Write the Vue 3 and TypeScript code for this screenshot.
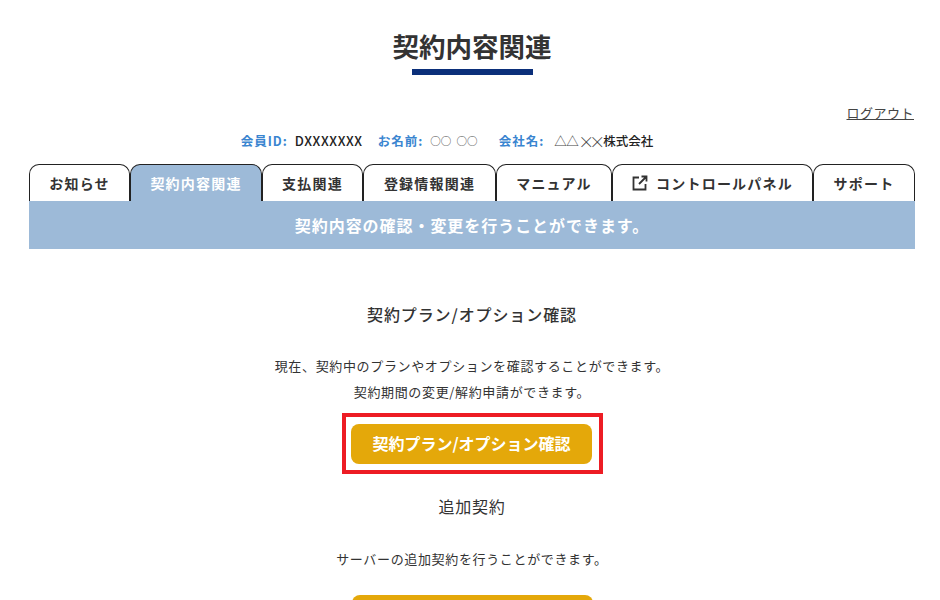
<script setup lang="ts">
const tabs = [
  { label: 'お知らせ', w: 101 },
  { label: '契約内容関連', w: 132, active: true },
  { label: '支払関連', w: 101 },
  { label: '登録情報関連', w: 133 },
  { label: 'マニュアル', w: 116 },
  { label: 'コントロールパネル', w: 201, ext: true },
  { label: 'サポート', w: 102 },
]
</script>

<template>
  <div class="page">
    <h1 class="title">契約内容関連</h1>
    <div class="rule"></div>
    <div class="logout-row"><a class="logout">ログアウト</a></div>
    <div class="info">
      <span class="item"><b>会員ID:</b><i class="id">DXXXXXXX</i></span>
      <span class="item wide"><b>お名前:</b><i class="thin name">○○ ○○</i></span>
      <span class="item"><b class="co">会社名:</b><i class="thin">△△</i><i class="thin x">××</i><i>株式会社</i></span>
    </div>
    <nav class="tabs">
      <div v-for="t in tabs" :key="t.label" class="tab" :class="{ active: t.active }" :style="{ width: t.w + 'px' }">
        <svg v-if="t.ext" class="ext" width="16" height="16" viewBox="0 0 16 16" fill="none" stroke="#333" stroke-width="1.8">
          <path d="M7 2.500H1.500v12h12V9" />
          <path d="M9.500 1.500h5v5M14.500 1.500 7 9" />
        </svg>
        {{ t.label }}
      </div>
    </nav>
    <div class="banner">契約内容の確認・変更を行うことができます。</div>
    <section class="content">
      <h2 class="h-bold">契約プラン/オプション確認</h2>
      <p class="p1">現在、契約中のプランやオプションを確認することができます。</p>
      <p class="p2">契約期間の変更/解約申請ができます。</p>
      <div class="highlight"><button class="btn">契約プラン/オプション確認</button></div>
      <h2 class="h-normal">追加契約</h2>
      <p class="p3">サーバーの追加契約を行うことができます。</p>
      <div class="btn last"></div>
    </section>
  </div>
</template>

<style>
html, body { margin: 0; background: #fff; overflow: hidden; }
</style>

<style scoped>
.page {
  height: 600px; overflow: hidden; box-sizing: border-box; padding: 0 25px 0 29px;
  font-family: "Noto Sans CJK JP", "Noto Sans", sans-serif; color: #333; text-align: center;
}
.title { margin: 0; padding-top: 27px; font-size: 26.500px; line-height: 38px; font-weight: 700; }
.rule { width: 121px; height: 6px; background: #0b2f7a; margin: 4px auto 0; position: relative; left: 0.5px; }
.logout-row { text-align: right; margin-top: 24px; height: 20px; padding-right: 1px; }
.logout { font-size: 13px; line-height: 20px; text-decoration: underline; color: #444; letter-spacing: 0.5px; }
.info { display: flex; justify-content: center; gap: 15px; margin-top: 13px; padding-right: 50px; font-size: 12.500px; line-height: 18px; }
.item { display: flex; align-items: center; white-space: pre; }
.info b { color: #3a85d0; margin-right: 7px; letter-spacing: 1px; font-weight: 700; }
.info b.co { margin-right: 10px; }
.info i { font-style: normal; font-weight: 500; color: #222; }
.info i.id { font-size: 13px; letter-spacing: 0.6px; }
.info i.thin { font-weight: 400; color: #444; letter-spacing: -0.5px; }
.info i.name { font-size: 10.500px; letter-spacing: 0; word-spacing: 3px; }
.info i.x { font-size: 16px; font-weight: 300; letter-spacing: -5px; line-height: 18px; margin-right: 3px; }
.item.wide { margin-right: 6px; }
.tabs { display: flex; margin-top: 14px; height: 37px; }
.tab {
  box-sizing: border-box; border: 1px solid #222; border-bottom: none; border-radius: 10px 10px 0 0;
  font-size: 14px; font-weight: 700; letter-spacing: 1.2px; line-height: 37px; background: #fff;
  display: flex; align-items: center; justify-content: center; gap: 8px;
}
.tab.active { background: #9dbad8; color: #fff; }
.banner { height: 48px; line-height: 48px; background: #9dbad8; color: #fff; font-size: 16px; font-weight: 700; letter-spacing: 0.95px; }
.content { display: flex; flex-direction: column; align-items: center; }
.h-bold { margin: 54px 0 0; font-size: 16px; line-height: 22px; font-weight: 500; letter-spacing: 0.9px; }
.p1 { margin: 32px 0 0; font-size: 13px; line-height: 18px; letter-spacing: 0.65px; }
.p2 { margin: 8px 0 0; font-size: 13px; line-height: 18px; letter-spacing: 0.65px; }
.highlight { margin: 12px 0 0 1px; border: 4px solid #ed1c24; padding: 7px 7px 6px 5px; line-height: 0; }
.btn {
  width: 241px; height: 40px; border: none; border-radius: 8px; background: #e4a80a; color: #fff;
  font-family: inherit; font-size: 16px; font-weight: 700; padding: 0 0 2px; white-space: nowrap;
}
.h-normal { margin: 20px 0 0; font-size: 16px; line-height: 24px; font-weight: 400; letter-spacing: 0.7px; }
.p3 { margin: 32px 0 0; font-size: 13px; line-height: 18px; letter-spacing: 0.65px; }
.btn.last { margin-top: 27px; flex: none; }
</style>
